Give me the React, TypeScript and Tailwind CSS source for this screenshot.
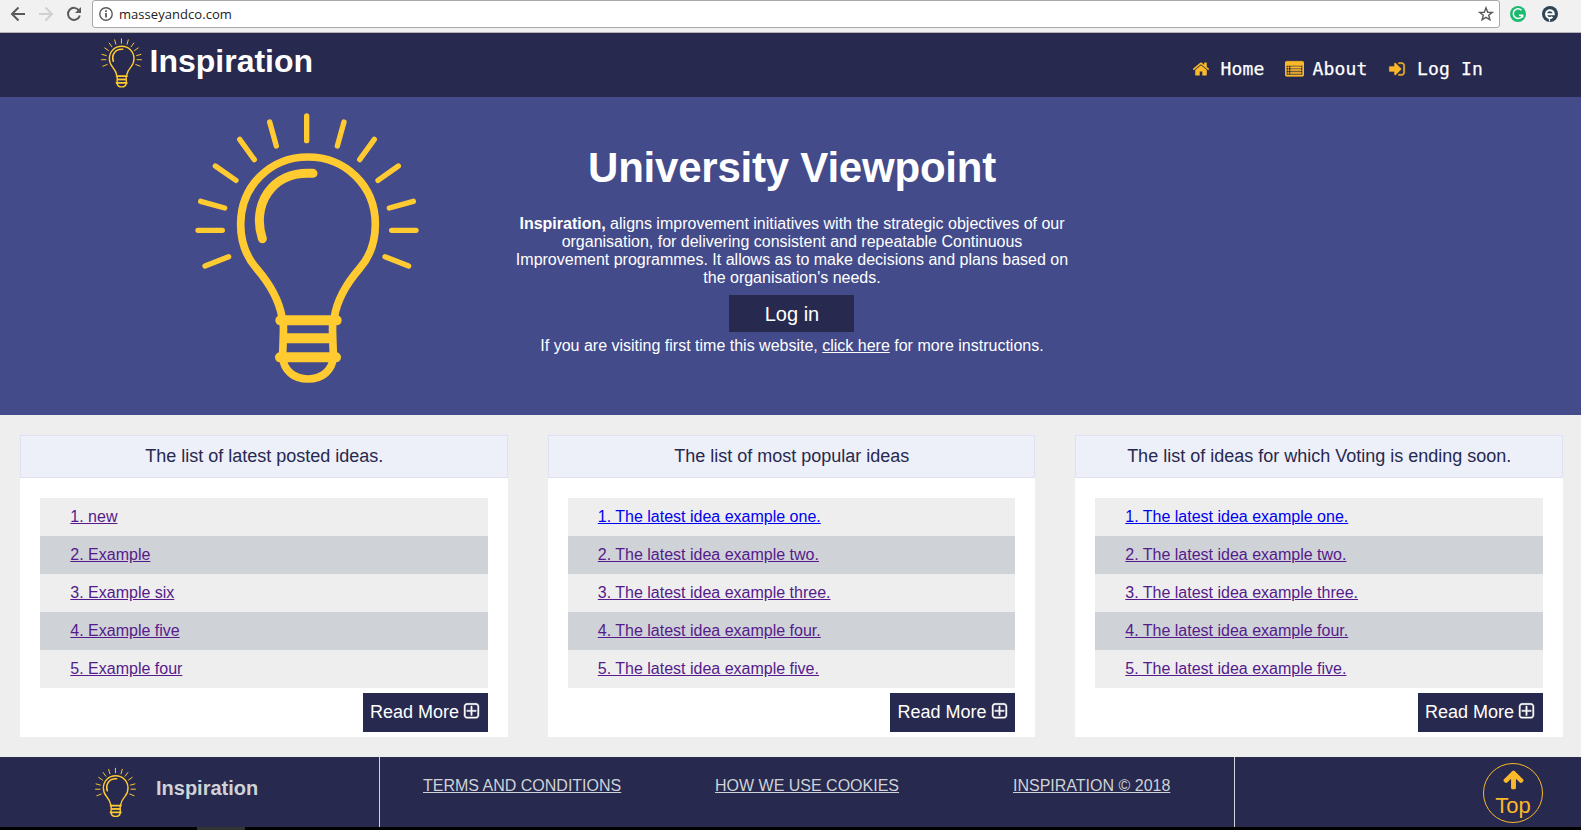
import React from "react";

const HOME =
  "M1472 992v480q0 26-19 45t-45 19h-384v-384h-256v384h-384q-26 0-45-19t-19-45v-480q0-1 .5-3t.5-3l575-474 575 474q1 2 1 6zm223-69l-62 74q-8 9-21 11h-3q-13 0-21-7l-692-577-692 577q-12 8-24 7-13-2-21-11l-62-74q-8-10-7-23.5t11-21.5l719-599q32-26 76-26t76 26l244 204v-195q0-14 9-23t23-9h192q14 0 23 9t9 23v408l219 182q10 8 11 21.5t-7 23.5z";
const LIST =
  "M384 1184v64q0 13-9.5 22.5t-22.5 9.5h-64q-13 0-22.5-9.5t-9.5-22.5v-64q0-13 9.5-22.5t22.5-9.5h64q13 0 22.5 9.5t9.5 22.5zm0-256v64q0 13-9.5 22.5t-22.5 9.5h-64q-13 0-22.5-9.5t-9.5-22.5v-64q0-13 9.5-22.5t22.5-9.5h64q13 0 22.5 9.5t9.5 22.5zm0-256v64q0 13-9.5 22.5t-22.5 9.5h-64q-13 0-22.5-9.5t-9.5-22.5v-64q0-13 9.5-22.5t22.5-9.5h64q13 0 22.5 9.5t9.5 22.5zm1152 512v64q0 13-9.5 22.5t-22.5 9.5h-960q-13 0-22.5-9.5t-9.5-22.5v-64q0-13 9.5-22.5t22.5-9.5h960q13 0 22.5 9.5t9.5 22.5zm0-256v64q0 13-9.5 22.5t-22.5 9.5h-960q-13 0-22.5-9.5t-9.5-22.5v-64q0-13 9.5-22.5t22.5-9.5h960q13 0 22.5 9.5t9.5 22.5zm0-256v64q0 13-9.5 22.5t-22.5 9.5h-960q-13 0-22.5-9.5t-9.5-22.5v-64q0-13 9.5-22.5t22.5-9.5h960q13 0 22.5 9.5t9.5 22.5zm128 704v-832q0-13-9.5-22.5t-22.5-9.5h-1472q-13 0-22.5 9.5t-9.5 22.5v832q0 13 9.5 22.5t22.5 9.5h1472q13 0 22.5-9.5t9.5-22.5zm128-1088v1088q0 66-47 113t-113 47h-1472q-66 0-113-47t-47-113v-1088q0-66 47-113t113-47h1472q66 0 113 47t47 113z";
const SIGN_IN =
  "M1312 896q0 26-19 45l-544 544q-19 19-45 19t-45-19-19-45v-288h-448q-26 0-45-19t-19-45v-384q0-26 19-45t45-19h448v-288q0-26 19-45t45-19 45 19l544 544q19 19 19 45zm352-352v704q0 119-84.5 203.5t-203.5 84.5h-320q-13 0-22.5-9.5t-9.5-22.5q0-4-1-20t-.5-26.5 3-23.5 10-19.5 20.5-6.5h320q66 0 113-47t47-113v-704q0-66-47-113t-113-47h-312l-11.5-1-11.5-3-8-5.5-7-9-2-13.5q0-4-1-20t-.5-26.5 3-23.5 10-19.5 20.5-6.5h320q119 0 203.5 84.5t84.5 203.5z";
const ARROW_UP =
  "M1675 971q0 51-37 90l-75 75q-38 38-91 38-54 0-90-38l-294-293v704q0 52-37.5 84.5t-90.5 32.5h-128q-53 0-90.5-32.5t-37.5-84.5v-704l-294 293q-36 38-90 38t-90-38l-75-75q-38-38-38-90 0-53 38-91l651-651q35-37 90-37 54 0 91 37l651 651q37 39 37 91z";
const PLUS_SQUARE =
  "M1344 800v64q0 14-9 23t-23 9h-352v352q0 14-9 23t-23 9h-64q-14 0-23-9t-9-23v-352h-352q-14 0-23-9t-9-23v-64q0-14 9-23t23-9h352v-352q0-14 9-23t23-9h64q14 0 23 9t9 23v352h352q14 0 23 9t9 23zm128 448v-832q0-66-47-113t-113-47h-832q-66 0-113 47t-47 113v832q0 66 47 113t113 47h832q66 0 113-47t47-113zm128-832v832q0 119-84.5 203.5t-203.5 84.5h-832q-119 0-203.5-84.5t-84.5-203.5v-832q0-119 84.5-203.5t203.5-84.5h832q119 0 203.5 84.5t84.5 203.5z";

function Icon({ d, className }: { d: string; className: string }) {
  return (
    <svg viewBox="0 0 1792 1792" className={className} fill="currentColor">
      <path d={d} />
    </svg>
  );
}

function Bulb({ className }: { className: string }) {
  return (
    <svg viewBox="76 68 672 812" className={className} fill="none" stroke="#ffcb31" strokeLinecap="round" strokeLinejoin="round">
      <path
        strokeWidth="23"
        strokeLinecap="butt"
        d="M337 680C327 625 298 578 262 536C230 500 213 455 213 402C213 285 304 200 415 200C526 200 617 285 617 402C617 455 600 500 570 534C532 578 503 625 494 680"
      />
      <path strokeWidth="27" d="M278 445C246 350 301 240 430 249" />
      <path strokeWidth="23" strokeLinecap="butt" d="M341 690C343 740 339 760 339 800C342 840 372 866 415 866C458 866 488 840 491 800C491 760 487 740 489 690" />
      <path strokeWidth="30" d="M332 690H501M331 801H499" />
      <path strokeWidth="30" strokeLinecap="butt" d="M342 744H489" />
      <path
        strokeWidth="16"
        d="M411 77V151M300 95L320 167M523 95L503 167M210 147L254 208M614 147L570 208M137 227L199 270M686 227L625 270M93 333L165 353M731 333L659 353M85 420H158M666 420H739M106 527L177 499M717 527L646 499"
      />
    </svg>
  );
}

type Item = { text: string; fresh?: boolean };

const examples: Item[] = [
  { text: "1. The latest idea example one.", fresh: true },
  { text: "2. The latest idea example two." },
  { text: "3. The latest idea example three." },
  { text: "4. The latest idea example four." },
  { text: "5. The latest idea example five." },
];
const panels: { title: string; items: Item[] }[] = [
  {
    title: "The list of latest posted ideas.",
    items: [{ text: "1. new" }, { text: "2. Example" }, { text: "3. Example six" }, { text: "4. Example five" }, { text: "5. Example four" }],
  },
  { title: "The list of most popular ideas", items: examples },
  { title: "The list of ideas for which Voting is ending soon.", items: examples },
];

function Panel({ title, items }: { title: string; items: Item[] }) {
  return (
    <section className="h-[302px] w-[487.5px] bg-white">
      <h2 className="h-[43px] border border-[#dfe2ee] bg-[#edf0f9] pl-px text-center text-[18px] leading-[41px] text-[#27294e]">{title}</h2>
      <ul className="mx-5 mt-5">
        {items.map((it) => (
          <li key={it.text} className="h-[38px] pl-[30.300px] text-[16px] leading-[37px] odd:bg-[#eeeeee] even:bg-[#cfd2d7]">
            <a className={it.fresh ? "text-[#0000ee] underline" : "text-[#551a8b] underline"}>{it.text}</a>
          </li>
        ))}
      </ul>
      <div className="mx-5 mt-[5px] flex justify-end">
        <button className="flex h-[39px] w-[125px] items-center justify-center gap-[3px] bg-[#27294e] pl-px text-[18px] text-white">
          Read More
          <Icon d={PLUS_SQUARE} className="mb-0.5 size-[19px] stroke-white stroke-[40px]" />
        </button>
      </div>
    </section>
  );
}

export default function App() {
  return (
    <div className="flex h-[830px] w-[1581px] flex-col overflow-hidden bg-[#eeeeee] font-['Liberation_Sans',Arial,sans-serif]">
      <div className="flex h-[33px] shrink-0 items-start border-b border-[#b6b4b6] bg-[#f1f1f1]">
        <svg viewBox="0 0 92 32" className="h-8 w-[92px] shrink-0" fill="none" strokeWidth="2">
          <path stroke="#5a5a5a" d="M25 14H12.5M18.5 7.5L12 14L18.5 20.5" />
          <path stroke="#d0d0d0" d="M39 14H51.5M45.500 7.500L52 14L45.500 20.500" />
          <path stroke="#5a5a5a" d="M79 10.500A6 6 0 1 0 79.800 15.500" />
          <path fill="#5a5a5a" d="M81 7V13H75Z" />
        </svg>
        <div className="flex h-7 w-[1408px] items-center rounded-[3px] border border-[#a9a9a9] bg-white pl-[6px] pr-[5px]">
          <svg viewBox="0 0 14 14" className="size-[14px]" fill="none" stroke="#5a5a5a">
            <circle cx="7" cy="7" r="6.200" strokeWidth="1.400" />
            <path strokeWidth="1.800" d="M7 6V10.500M7 3.200V5" />
          </svg>
          <span className="ml-[6px] grow font-['Open_Sans','Noto_Sans',sans-serif] text-[13px] leading-none tracking-[0.05px] text-[#222]">masseyandco.com</span>
          <svg viewBox="0 0 16 16" className="size-4" fill="none" stroke="#5a5a5a" strokeWidth="1.400">
            <path d="M8 1.800L9.700 6.200L14.300 6.400L10.700 9.300L11.900 13.800L8 11.300L4.100 13.800L5.300 9.300L1.700 6.400L6.300 6.200Z" />
          </svg>
        </div>
        <svg viewBox="0 0 81 32" className="h-8 w-[81px] shrink-0" fill="none">
          <circle cx="18" cy="14" r="8" fill="#1eb971" />
          <path stroke="#fff" strokeWidth="1.500" d="M21.500 10.300A4.800 4.800 0 1 0 22.600 15.200H19M22.600 14.500V17.500" />
          <circle cx="50" cy="14" r="8" fill="#2d4556" />
          <path stroke="#fff" strokeWidth="2" d="M46.500 14.300H53.800A3.900 3.900 0 1 0 52.500 17" />
          <path stroke="#fff" strokeWidth="1.200" d="M49.500 18V21.500" />
        </svg>
      </div>

      <header className="flex h-16 shrink-0 bg-[#27294e]">
        <div className="ml-[101px] flex">
          <Bulb className="mt-[5px] h-[50px] w-[41px]" />
          <span className="ml-[7.500px] mt-[10px] text-[32px] font-bold leading-9 text-white">Inspiration</span>
        </div>
        <nav className="ml-auto mr-[98px] mt-[24px] flex h-6 items-center font-['DejaVu_Sans_Mono',monospace] text-[18px] leading-6 tracking-[0.16px] text-white [-webkit-text-stroke:0.25px_white]">
          <Icon d={HOME} className="mr-[11px] size-[18px] text-[#fbb829]" />
          <span>Home</span>
          <Icon d={LIST} className="ml-5 mr-[9px] size-[19px] stroke-current stroke-[60px] text-[#fbb829]" />
          <span>About</span>
          <Icon d={SIGN_IN} className="ml-[20.500px] mr-[11px] size-[18px] stroke-current stroke-[40px] text-[#fbb829]" />
          <span>Log In</span>
        </nav>
      </header>

      <main className="flex h-[318px] shrink-0 bg-[#434b8b] text-white">
        <Bulb className="ml-[195px] mt-[16px] h-[270.700px] w-[224px]" />
        <div className="ml-[93px] flex w-[560px] flex-col items-center pt-[47px] text-center text-[16px] leading-[18px]">
          <h1 className="text-[42px] font-bold leading-[48px] tracking-[-0.22px]">University Viewpoint</h1>
          <p className="mt-[23px] whitespace-nowrap">
            <b>Inspiration,</b> aligns improvement initiatives with the strategic objectives of our
            <br />
            organisation, for delivering consistent and repeatable Continuous
            <br />
            Improvement programmes. It allows as to make decisions and plans based on
            <br />
            the organisation's needs.
          </p>
          <button className="mr-px mt-[8px] h-[37px] w-[125px] bg-[#27294e] pl-px text-[20px]">Log in</button>
          <p className="mt-[5px] whitespace-nowrap">
            If you are visiting first time this website, <a className="underline">click here</a> for more instructions.
          </p>
        </div>
      </main>

      <div className="flex h-[342px] shrink-0 gap-10 pl-5 pt-5">
        {panels.map((p) => (
          <Panel key={p.title} {...p} />
        ))}
      </div>

      <footer className="flex h-[70px] shrink-0 bg-[#27294e] text-[#cfd2d7]">
        <div className="flex w-[380px] border-r border-[#cfd2d7] pl-[95px]">
          <Bulb className="mt-[10px] h-[51px] w-[41px]" />
          <span className="ml-5 mt-[19px] text-[20px] font-bold leading-6">Inspiration</span>
        </div>
        <div className="flex w-[855px] border-r border-[#cfd2d7] pl-[43px] pt-[20px] text-[16px] leading-[18px]">
          <a className="w-[292px] underline">TERMS AND CONDITIONS</a>
          <a className="w-[298px] underline">HOW WE USE COOKIES</a>
          <a className="underline">INSPIRATION © 2018</a>
        </div>
        <a className="ml-[248px] mt-[6px] flex size-[60px] flex-col items-center rounded-full border border-[#fbb829] text-[22px] leading-6 text-[#fbb829]">
          <Icon d={ARROW_UP} className="mt-[4px] size-[23px]" />
          <span className="mt-[3px]">Top</span>
        </a>
      </footer>
      <div className="flex h-[3px] shrink-0 bg-black pl-[197px]">
        <div className="h-[3px] w-12 bg-[#333]" />
      </div>
    </div>
  );
}
